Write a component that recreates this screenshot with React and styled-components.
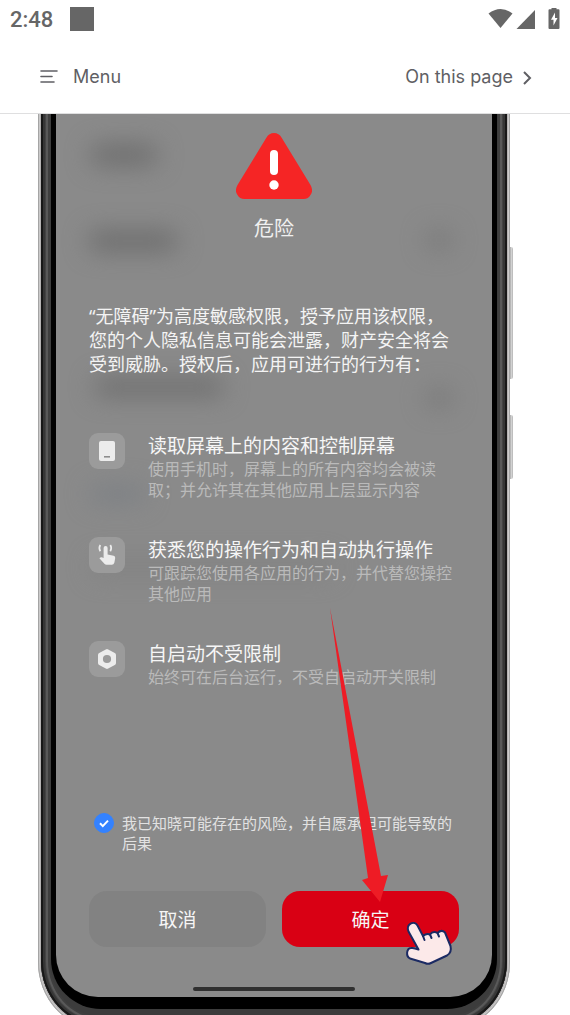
import React, { useState } from "react";
import styled, { createGlobalStyle } from "styled-components";

const GlobalStyle = createGlobalStyle`
  * { box-sizing: border-box; }
  body {
    margin: 0;
    background: #fff;
    font-family: "Noto Sans", "Noto Sans CJK SC", sans-serif;
  }
  h1, h2, p, ul { margin: 0; padding: 0; font-weight: 400; }
  button { font: inherit; border: 0; background: none; padding: 0; cursor: pointer; }
`;

const Page = styled.div`
  display: flex;
  flex-direction: column;
  height: 100vh;
  overflow: hidden;
`;

const StatusBar = styled.header`
  display: flex;
  flex: none;
  align-items: center;
  gap: 17px;
  height: 40px;
  padding: 0 8px 2px 10px;
  color: #666;
`;

const Clock = styled.time`
  padding-top: 2px;
  font: 500 22px/24px Roboto, sans-serif;
`;

const AppBadge = styled.span`
  width: 24px;
  height: 24px;
  background: #666;
`;

const StatusIcons = styled.svg`
  margin-left: auto;
`;

const NavBar = styled.nav`
  display: flex;
  flex: none;
  align-items: center;
  justify-content: space-between;
  height: 74px;
  padding: 0 38px 0 39px;
  border-bottom: 1px solid #dfdfe0;
`;

const NavButton = styled.button`
  display: flex;
  align-items: center;
  gap: ${(p) => p.$gap}px;
  color: #5f5f64;
  && { font: 400 18px/24px Inter, sans-serif; }
`;

const Viewport = styled.main`
  flex: 1;
  min-height: 0;
  overflow: hidden;
  padding: 0 60px 0 38px;
`;

const Phone = styled.div`
  position: relative;
  margin-top: -40px;
  padding: 3px;
  border-radius: 0 0 60px 60px / 0 0 66px 66px;
  background: #b5b3b3;
  box-shadow: inset 0 0 0 1px #a5a5a5, inset 0 0 0 2px #cbcaca;
`;

const Rim = styled.div`
  padding: 10px 10px 16px;
  border-radius: 0 0 58px 58px / 0 0 64px 64px;
  background: #3c3c3c;
  box-shadow: inset 0 0 0 2px #181818, inset 0 0 0 4px #363636,
    inset 0 0 0 5px #444, inset 0 0 0 7px #595959, inset 0 0 0 9px #3f3f3f;
`;

const Bezel = styled.div`
  padding: 12px 5px;
  border-radius: 0 0 50px 50px;
  background: #000;
`;

const SideKey = styled.span`
  position: absolute;
  left: 100%;
  top: ${(p) => p.$top}px;
  width: 3px;
  height: ${(p) => p.$height}px;
  border-radius: 0 2px 2px 0;
  background: linear-gradient(90deg, #aaa, #d2d2d2 50%, #b4b4b4);
`;

const Screen = styled.section`
  position: relative;
  display: flex;
  flex-direction: column;
  padding: 30px 33px 6px;
  border-radius: 0 0 42px 42px;
  background: #8a8a8a;
  overflow: hidden;
`;

const Smudge = styled.span`
  position: absolute;
  left: ${(p) => p.$left}px;
  top: ${(p) => p.$top}px;
  width: ${(p) => p.$width}px;
  height: ${(p) => p.$height}px;
  border-radius: 12px;
  background: ${(p) => p.$color};
  filter: blur(12px);
`;

const Content = styled.div`
  position: relative;
  display: flex;
  flex-direction: column;
`;

const Alert = styled.div`
  display: flex;
  flex-direction: column;
  align-items: center;
  gap: 16px;
  padding-top: 4px;
`;

const Title = styled.h1`
  color: #f0f0f0;
  font-size: 20px;
  line-height: 28px;
`;

const Intro = styled.p`
  margin-top: 61px;
  color: #f4f4f4;
  font-size: 18px;
  line-height: 24px;
`;

const List = styled.ul`
  display: flex;
  flex-direction: column;
  gap: 36px;
  margin-top: 57px;
  list-style: none;
`;

const Item = styled.li`
  display: flex;
  align-items: flex-start;
  gap: 23px;
`;

const Tile = styled.span`
  display: grid;
  flex: none;
  place-items: center;
  width: 36px;
  height: 36px;
  border-radius: 9px;
  background: #9b9b9b;
`;

const ItemTitle = styled.h2`
  color: #f6f6f6;
  font-size: 19px;
  line-height: 26px;
`;

const ItemText = styled.p`
  color: #bababa;
  font-size: 16px;
  line-height: 21px;
`;

const Consent = styled.label`
  display: flex;
  align-items: flex-start;
  gap: 8px;
  margin-top: 125px;
  padding-left: 5px;
  color: #e2e2e2;
  font-size: 15px;
  line-height: 20px;
`;

const Tick = styled.input`
  flex: none;
  width: 20px;
  height: 20px;
  margin: 0;
  appearance: none;
  border: 1px solid #3482ff;
  border-radius: 50%;
  &:checked {
    background: #3482ff url("data:image/svg+xml,%3Csvg xmlns='http://www.w3.org/2000/svg' viewBox='0 0 18 18'%3E%3Cpath d='M5 9.3l2.8 2.8L13 6.6' fill='none' stroke='white' stroke-width='2'/%3E%3C/svg%3E");
  }
`;

const Actions = styled.div`
  display: grid;
  grid-template-columns: 1fr 1fr;
  gap: 16px;
  margin-top: 38px;
`;

const Action = styled.button`
  height: 56px;
  border-radius: 18px;
  && {
    background: ${(p) => (p.$danger ? "#d90014" : "#828282")};
    color: #f6f6f6;
    font-size: 19px;
  }
`;

const HomeBar = styled.span`
  align-self: center;
  width: 162px;
  height: 4px;
  margin-top: 40px;
  border-radius: 2px;
  background: #303030;
`;

const Arrow = styled.svg`
  position: absolute;
  right: 102px;
  bottom: 95px;
`;

const Pointer = styled.svg`
  position: absolute;
  right: 32px;
  bottom: 25px;
`;

const ScreenIcon = () => (
  <svg width="24" height="24" viewBox="0 0 24 24">
    <rect x="4" y="2" width="16" height="20" rx="2" fill="#ececec" />
    <rect x="9" y="17" width="6" height="1.6" fill="#8d8d8d" />
  </svg>
);

const TouchIcon = () => (
  <svg width="24" height="24" viewBox="0 0 24 24">
    <path
      d="M8.6 4.9a2 2 0 0 1 4 0v6.5l6 1.4q1.8.5 1.6 2.3l-.8 4.3q-.6 2.4-2.6 2.4h-5.2q-1.3 0-2.2-1l-5-5.6q1.6-1.7 4.2-.2z"
      fill="#ececec"
    />
    <path d="M5.3 2Q3.4 5 5.3 8.2M15.3 2Q17.2 5 15.3 8.2" fill="none" stroke="#ececec" strokeWidth="1.7" />
  </svg>
);

const NutIcon = () => (
  <svg width="24" height="24" viewBox="0 0 24 24">
    <path
      fillRule="evenodd"
      d="M10.8 2.4q1.2-.7 2.4 0l6.600 3.700q1.200.7 1.200 2v7.800q0 1.300-1.200 2l-6.600 3.700q-1.200.7-2.400 0l-6.600-3.700Q3 17.200 3 15.900V8.100q0-1.300 1.200-2zM12 7.900a4.100 4.100 0 1 0 0 8.200a4.100 4.100 0 1 0 0-8.200z"
      fill="#ececec"
    />
  </svg>
);

const permissions = [
  {
    icon: <ScreenIcon />,
    title: "读取屏幕上的内容和控制屏幕",
    text: "使用手机时，屏幕上的所有内容均会被读取；并允许其在其他应用上层显示内容",
  },
  {
    icon: <TouchIcon />,
    title: "获悉您的操作行为和自动执行操作",
    text: "可跟踪您使用各应用的行为，并代替您操控其他应用",
  },
  {
    icon: <NutIcon />,
    title: "自启动不受限制",
    text: "始终可在后台运行，不受自启动开关限制",
  },
];

const smudges = [
  { $left: 34, $top: 46, $width: 68, $height: 20, $color: "#6c6c6c" },
  { $left: 32, $top: 132, $width: 90, $height: 20, $color: "#6c6c6c" },
  { $left: 370, $top: 132, $width: 26, $height: 18, $color: "#777" },
  { $left: 38, $top: 279, $width: 130, $height: 18, $color: "#6d6d6d" },
  { $left: 370, $top: 290, $width: 26, $height: 18, $color: "#777" },
  { $left: 34, $top: 387, $width: 55, $height: 16, $color: "#7b7f84" },
  { $left: 36, $top: 460, $width: 240, $height: 16, $color: "#818181" },
];

export default function App() {
  const [agreed, setAgreed] = useState(true);
  return (
    <Page>
      <GlobalStyle />
      <StatusBar>
        <Clock>2:48</Clock>
        <AppBadge />
        <StatusIcons width="76" height="24" viewBox="0 0 76 24" fill="#666">
          <path d="M2.500 6.500Q14.500-2.500 26.500 6.500L14.500 21z" />
          <path d="M49 3V22H30.500z" />
          <path
            fillRule="evenodd"
            d="M63.500 2.300h2V1h5v1.300h2q1 0 1 1V21q0 1-1 1h-9q-1 0-1-1V3.300q0-1 1-1zM69 5.500l-4 7.300h2.500v5.700l4-7.500h-2.500z"
          />
        </StatusIcons>
      </StatusBar>
      <NavBar>
        <NavButton $gap={14}>
          <svg width="20" height="16" viewBox="0 0 20 16" stroke="currentColor" strokeWidth="1.600" strokeLinecap="round">
            <path d="M2 2h16M2 7.500h11M2 13h13" />
          </svg>
          Menu
        </NavButton>
        <NavButton $gap={9}>
          On this page
          <svg width="10" height="16" viewBox="0 0 10 16" fill="none" stroke="currentColor" strokeWidth="2">
            <path d="M2 3l6 6-6 6" />
          </svg>
        </NavButton>
      </NavBar>
      <Viewport>
        <Phone>
          <SideKey $top={173} $height={132} />
          <SideKey $top={341} $height={64} />
          <Rim>
            <Bezel>
              <Screen>
                {smudges.map((s) => (
                  <Smudge key={`${s.$left}-${s.$top}`} {...s} />
                ))}
                <Content>
                  <Alert>
                    <svg width="76" height="66" viewBox="0 0 76 66">
                      <path
                        d="M30.500 4.500Q33 0 38 0T45.500 4.500L74.500 52Q77.500 57.500 74.800 61.500Q72.500 66 67.500 66H8.500Q3.500 66 1.200 61.500Q-1.500 57.500 1.500 52z"
                        fill="#f52525"
                      />
                      <rect x="34" y="17" width="8" height="25" rx="4" fill="#fff" />
                      <circle cx="38" cy="52" r="4.700" fill="#fff" />
                    </svg>
                    <Title>危险</Title>
                  </Alert>
                  <Intro>
                    “无障碍”为高度敏感权限，授予应用该权限，您的个人隐私信息可能会泄露，财产安全将会受到威胁。授权后，应用可进行的行为有：
                  </Intro>
                  <List>
                    {permissions.map((p) => (
                      <Item key={p.title}>
                        <Tile>{p.icon}</Tile>
                        <div>
                          <ItemTitle>{p.title}</ItemTitle>
                          <ItemText>{p.text}</ItemText>
                        </div>
                      </Item>
                    ))}
                  </List>
                  <Consent>
                    <Tick type="checkbox" checked={agreed} onChange={(e) => setAgreed(e.target.checked)} />
                    <span>我已知晓可能存在的风险，并自愿承担可能导致的后果</span>
                  </Consent>
                  <Actions>
                    <Action>取消</Action>
                    <Action $danger>确定</Action>
                  </Actions>
                  <HomeBar />
                </Content>
                <Arrow width="60" height="294" viewBox="0 0 60 294" fill="#ee1c25">
                  <path d="M0 0L51 268L58 267L50 294L32 272L38 270z" />
                </Arrow>
                <Pointer width="60" height="60" viewBox="0 0 60 60" strokeLinecap="round" strokeLinejoin="round" stroke="#1b2a63" strokeWidth="2">
                  <path
                    d="M8.500 19.500C5.500 12 14 8 17.500 13.500L23 24Q26.500 21 30 22.500Q33 18.500 37.500 21Q41.500 17 45 20.500L50.500 34Q52 40.500 47 43.500L31 51Q28 52.500 25 51L10 46.500C5.500 44 6.500 36.500 11 36Q14 35.500 18.500 37.500z"
                    fill="#fce9e9"
                  />
                  <path d="M23 24l1.500 4M30 22.500l1.500 3.500M37.500 21l1.500 3.500" fill="none" />
                </Pointer>
              </Screen>
            </Bezel>
          </Rim>
        </Phone>
      </Viewport>
    </Page>
  );
}
